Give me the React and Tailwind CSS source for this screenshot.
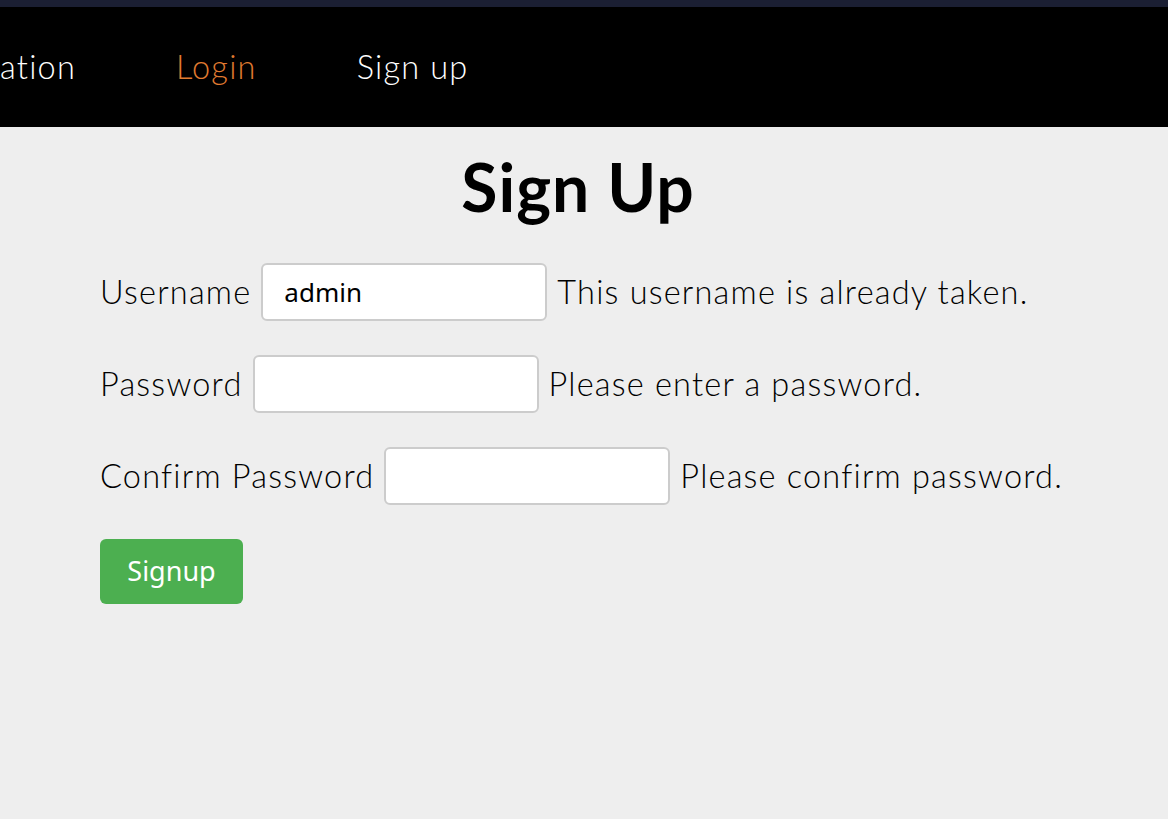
const Field = ({ label, value = '', message, type = 'text' }) => (
  <div className="flex items-center">
    <span>{label}</span>
    <input
      type={type}
      defaultValue={value}
      className="ml-[10px] mr-[10px] h-[58px] w-[286px] rounded-[6px] border-2 border-[#cccccc] bg-white px-[21px] text-[26px] font-normal tracking-normal text-black outline-none"
      style={{ fontFamily: '"Noto Sans", sans-serif' }}
    />
    <span>{message}</span>
  </div>
);

export default function App() {
  return (
    <div className="min-h-[819px] bg-[#eeeeee] font-['Lato',sans-serif] font-light tracking-[1.2px]">
      <div className="h-[7px] bg-[#1b1f33]" />
      <nav className="flex h-[120px] items-center bg-black text-[32.5px] text-white">
        <span className="w-[76px] text-right">ation</span>
        <span className="ml-[100px] text-[#e07b30]">Login</span>
        <span className="ml-[100px]">Sign up</span>
      </nav>
      <main className="px-[100px] text-[32.5px] text-black">
        <h1 className="mt-[20px] pr-[12px] text-center text-[66px] font-bold leading-[80px] tracking-[1px]">Sign Up</h1>
        <div className="mt-[36px] flex flex-col gap-[34px]">
          <Field label="Username" value="admin" message="This username is already taken." />
          <Field label="Password" type="password" message="Please enter a password." />
          <Field label="Confirm Password" type="password" message="Please confirm password." />
        </div>
        <button className="mt-[34px] h-[65px] w-[143px] rounded-[6px] bg-[#4caf50] text-[27px] font-normal tracking-normal text-white font-['Noto_Sans',sans-serif]">
          Signup
        </button>
      </main>
    </div>
  );
}
